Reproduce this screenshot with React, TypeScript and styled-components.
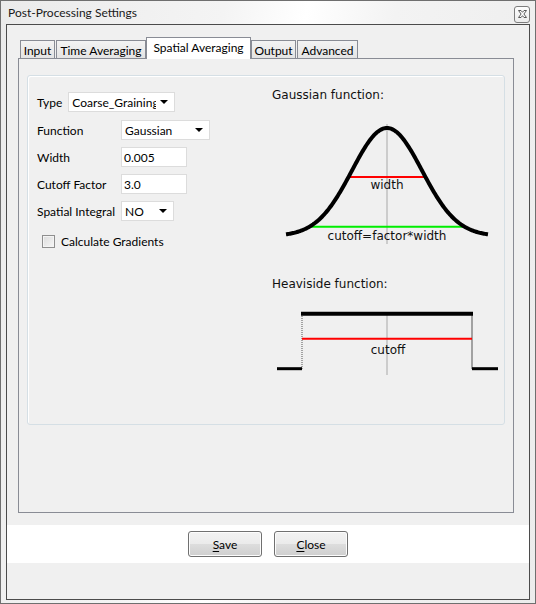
import styled, { createGlobalStyle } from "styled-components"

const GlobalStyle = createGlobalStyle`
  html, body {
    margin: 0;
    padding: 0;
    background: #ffffff;
  }
  * { box-sizing: border-box; }
`

const UI_FONT = `"Segoe UI", Lato, "Noto Sans", sans-serif`
const PLOT_FONT = `"DejaVu Sans", "Noto Sans", sans-serif`

const Window = styled.div`
  width: 536px;
  height: 604px;
  border: 1px solid #6f6f6f;
  background: linear-gradient(100deg, #ebebeb 0%, #f4f4f4 35%, #ffffff 48%, #f3f3f3 62%, #ececec 100%);
  display: flex;
  flex-direction: column;
  padding: 0 5px 3px 5px;
  font-family: ${UI_FONT};
  font-size: 12px;
  color: #000;
`

const TitleBar = styled.div`
  height: 23px;
  display: flex;
  align-items: center;
  justify-content: space-between;
  padding: 0 0 0 2px;
`

const Title = styled.span`
  font-size: 12px;
  color: #1a1a1a;
  margin-top: -1px;
`

const CloseBox = styled.div`
  width: 16px;
  height: 17px;
  margin-top: 3px;
  border: 1px solid #7d7d7d;
  border-radius: 3px;
  background: linear-gradient(#fdfdfd, #ececec);
  display: flex;
  align-items: center;
  justify-content: center;
`

const Client = styled.div`
  flex: 1;
  border: 1px solid #4b4b4b;
  background: #f0f0f0;
  display: flex;
  flex-direction: column;
`

const TabArea = styled.div`
  padding: 12px 15px 0 11px;
`

const TabBar = styled.div`
  display: flex;
  align-items: flex-end;
  height: 21px;
  padding-left: 2px;
`

const Tab = styled.div<{ $active?: boolean; $w: number }>`
  position: relative;
  width: ${(p) => p.$w}px;
  height: ${(p) => (p.$active ? 22 : 18)}px;
  margin-bottom: ${(p) => (p.$active ? -1 : 0)}px;
  margin-right: ${(p) => (p.$active ? 0 : 1)}px;
  margin-left: ${(p) => (p.$active ? -1 : 0)}px;
  z-index: ${(p) => (p.$active ? 2 : 1)};
  border: 1px solid #898c95;
  border-bottom: none;
  background: ${(p) => (p.$active ? "#ffffff" : "linear-gradient(#f3f3f3, #e4e4e4)")};
  display: flex;
  justify-content: center;
  align-items: ${(p) => (p.$active ? "flex-start" : "center")};
  padding-top: ${(p) => (p.$active ? 2 : 1)}px;
  white-space: nowrap;
  font-size: 12px;
`

const TabPane = styled.div`
  height: 455px;
  border: 1px solid #898c95;
  background: #f0f0f0;
  padding: 16px 8px 0 8px;
`

const GroupBox = styled.div`
  height: 350px;
  border: 1px solid #d5dfe5;
  border-radius: 3px;
  box-shadow: inset 1px 1px 0 #ffffff;
  display: flex;
`

const LeftColumn = styled.div`
  width: 243px;
  padding: 16px 0 0 9px;
  display: flex;
  flex-direction: column;
`

const TypeRow = styled.div`
  display: flex;
  align-items: center;
  gap: 6px;
  height: 20px;
  margin-bottom: 8px;
`

const FormGrid = styled.div`
  display: grid;
  grid-template-columns: 78px auto;
  column-gap: 6px;
  row-gap: 7px;
  align-items: center;
  justify-items: start;
`

const Label = styled.span`
  font-size: 12px;
  white-space: nowrap;
`

const Combo = styled.div<{ $w: number }>`
  width: ${(p) => p.$w}px;
  height: 20px;
  background: #ffffff;
  border: 1px solid #dcdcdc;
  display: flex;
  align-items: center;
  padding: 0 6px 0 3px;
  position: relative;
  overflow: hidden;
`

const ComboText = styled.span`
  flex: 1;
  min-width: 0;
  white-space: nowrap;
  overflow: hidden;
`

const Arrow = styled.span`
  width: 0;
  height: 0;
  border-left: 4px solid transparent;
  border-right: 4px solid transparent;
  border-top: 4px solid #000;
  margin-left: 4px;
  flex-shrink: 0;
`

const LineEdit = styled.div`
  width: 66px;
  height: 20px;
  background: #ffffff;
  border: 1px solid #dcdcdc;
  display: flex;
  align-items: center;
  padding-left: 2px;
`

const CheckRow = styled.label`
  display: flex;
  align-items: center;
  gap: 6px;
  margin: 13px 0 0 5px;
`

const CheckBox = styled.span`
  width: 13px;
  height: 13px;
  border: 1px solid #8f8f8f;
  background: linear-gradient(135deg, #dcdcdc, #f6f6f6);
  box-shadow: inset 0 0 0 1px #f4f4f4;
`

const RightColumn = styled.div`
  flex: 1;
  padding: 12px 0 0 0;
  display: flex;
  flex-direction: column;
`

const PlotTitle = styled.div<{ $gap?: number }>`
  font-family: ${PLOT_FONT};
  font-size: 12px;
  line-height: 14px;
  color: #111;
  margin-top: ${(p) => p.$gap ?? 0}px;
  padding-left: 1px;
`

const Plot = styled.svg<{ $top: number }>`
  display: block;
  margin: ${(p) => p.$top}px 0 0 -1px;
`

const Footer = styled.div`
  margin-top: 12px;
  height: 38px;
  background: #ffffff;
  display: flex;
  justify-content: center;
  align-items: flex-start;
  gap: 12px;
  padding-top: 6px;
`

const Button = styled.button`
  width: 74px;
  height: 26px;
  border: 1px solid #707070;
  border-radius: 3px;
  background: linear-gradient(#f2f2f2 0%, #ebebeb 50%, #dddddd 51%, #cfcfcf 100%);
  box-shadow: inset 0 0 0 1px #fcfcfc;
  font-family: ${UI_FONT};
  font-size: 12px;
  color: #000;
  padding: 0;
  u { text-decoration: underline; text-underline-offset: 2px; }
`

const SIGMA = 35
const CX = 117
const PEAK = 22
const BASE = 130

function gaussPath() {
  const pts: string[] = []
  for (let x = -101; x <= 101; x += 1) {
    const y = BASE - (BASE - PEAK) * Math.exp(-(x * x) / (2 * SIGMA * SIGMA))
    pts.push(`${(CX + x).toFixed(1)},${y.toFixed(2)}`)
  }
  return "M" + pts.join(" L")
}

function halfWidth(y: number) {
  const v = (BASE - y) / (BASE - PEAK)
  return SIGMA * Math.sqrt(2 * Math.log(1 / v))
}

const GaussianPlot = () => {
  const red = halfWidth(71)
  const green = halfWidth(120.7)
  return (
    <Plot $top={4} width="230" height="145" viewBox="0 0 230 145">
      <line x1={CX} y1="18" x2={CX} y2="138" stroke="#a8a8a8" strokeWidth="1" />
      <line x1={CX - red} y1="71" x2={CX + red} y2="71" stroke="#ff0000" strokeWidth="2" />
      <line x1={CX - green} y1="120.7" x2={CX + green} y2="120.7" stroke="#00ee00" strokeWidth="2" />
      <path d={gaussPath()} fill="none" stroke="#000" strokeWidth="4" />
      <text x={CX} y="83" textAnchor="middle" fontFamily={PLOT_FONT} fontSize="12" fill="#111">width</text>
      <text x={CX} y="134" textAnchor="middle" fontFamily={PLOT_FONT} fontSize="12" fill="#111">cutoff=factor*width</text>
    </Plot>
  )
}

const HeavisidePlot = () => (
  <Plot $top={6} width="230" height="85" viewBox="0 0 230 85">
    <line x1="117" y1="16" x2="117" y2="78" stroke="#a8a8a8" strokeWidth="1" />
    <line x1="32" y1="17" x2="32" y2="72" stroke="#555" strokeWidth="1" strokeDasharray="1 1" />
    <line x1="202" y1="17" x2="202" y2="72" stroke="#555" strokeWidth="1" />
    <line x1="32" y1="41.7" x2="202" y2="41.7" stroke="#ff0000" strokeWidth="2" />
    <line x1="31" y1="16.7" x2="203" y2="16.7" stroke="#000" strokeWidth="4" />
    <line x1="7" y1="71.7" x2="32" y2="71.7" stroke="#000" strokeWidth="3" />
    <line x1="202" y1="71.7" x2="228" y2="71.7" stroke="#000" strokeWidth="3" />
    <text x="118" y="57" textAnchor="middle" fontFamily={PLOT_FONT} fontSize="12" fill="#111">cutoff</text>
  </Plot>
)

const tabs = [
  { label: "Input", w: 35 },
  { label: "Time Averaging", w: 90 },
  { label: "Spatial Averaging", w: 105, active: true },
  { label: "Output", w: 45 },
  { label: "Advanced", w: 61 },
]

export default function App() {
  return (
    <>
      <GlobalStyle />
      <Window>
        <TitleBar>
          <Title>Post-Processing Settings</Title>
          <CloseBox>
            <svg width="9" height="8" viewBox="0 0 9 8">
              <path
                d="M0.5 0.5 H3 L4.5 2.3 L6 0.5 H8.5 L5.9 4 L8.5 7.5 H6 L4.5 5.7 L3 7.5 H0.5 L3.1 4 Z"
                fill="#ffffff"
                stroke="#5a5a5a"
                strokeWidth="1"
                strokeLinejoin="round"
              />
            </svg>
          </CloseBox>
        </TitleBar>
        <Client>
          <TabArea>
            <TabBar>
              {tabs.map((t) => (
                <Tab key={t.label} $w={t.w} $active={t.active}>
                  {t.label}
                </Tab>
              ))}
            </TabBar>
            <TabPane>
              <GroupBox>
                <LeftColumn>
                  <TypeRow>
                    <Label>Type</Label>
                    <Combo $w={107}>
                      <ComboText>Coarse_Graining</ComboText>
                      <Arrow />
                    </Combo>
                  </TypeRow>
                  <FormGrid>
                    <Label>Function</Label>
                    <Combo $w={89}>
                      <ComboText>Gaussian</ComboText>
                      <Arrow />
                    </Combo>
                    <Label>Width</Label>
                    <LineEdit>0.005</LineEdit>
                    <Label>Cutoff Factor</Label>
                    <LineEdit>3.0</LineEdit>
                    <Label>Spatial Integral</Label>
                    <Combo $w={53}>
                      <ComboText>NO</ComboText>
                      <Arrow />
                    </Combo>
                  </FormGrid>
                  <CheckRow>
                    <CheckBox />
                    <Label>Calculate Gradients</Label>
                  </CheckRow>
                </LeftColumn>
                <RightColumn>
                  <PlotTitle>Gaussian function:</PlotTitle>
                  <GaussianPlot />
                  <PlotTitle $gap={26}>Heaviside function:</PlotTitle>
                  <HeavisidePlot />
                </RightColumn>
              </GroupBox>
            </TabPane>
          </TabArea>
          <Footer>
            <Button><u>S</u>ave</Button>
            <Button><u>C</u>lose</Button>
          </Footer>
        </Client>
      </Window>
    </>
  )
}
